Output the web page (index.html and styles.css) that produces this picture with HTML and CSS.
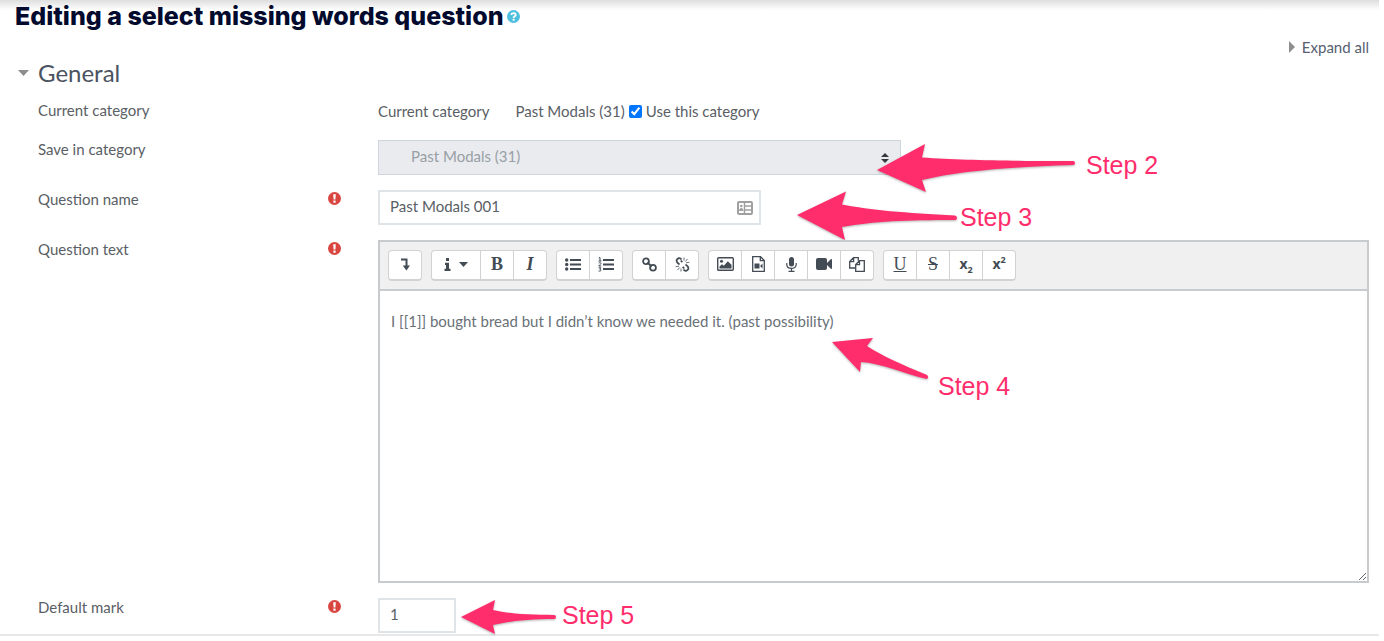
FILE: index.html
```html
<!DOCTYPE html>
<html lang="en">
<head>
<meta charset="utf-8">
<meta name="viewport" content="width=device-width, initial-scale=1">
<title>Editing a select missing words question</title>
<link rel="stylesheet" href="styles.css">
</head>
<body>
<svg class="defs" aria-hidden="true">
  <symbol id="required" viewBox="0 0 13 13">
    <circle cx="6.5" cy="6.5" r="6.5" fill="#d9453f"/>
    <path d="M5.2 2.2h2.600l-.4 5.300H5.600zM5.400 8.500h2.200v2.200H5.400z" fill="#fff"/>
  </symbol>
</svg>
<main class="page">
  <header class="title-bar">
    <h1 class="title">Editing a select missing words question</h1>
    <button class="help" type="button" aria-label="Help">
      <svg width="13" height="13" viewBox="0 0 13 13"><circle cx="6.5" cy="6.5" r="6.5" fill="#4fbfe0"/><path d="M4.4 5C4.4 2.4 8.7 2.4 8.7 4.9 8.7 6.4 6.6 6.3 6.6 7.9" fill="none" stroke="#fff" stroke-width="1.8"/><path d="M5.6 8.8h2v1.9h-2z" fill="#fff"/></svg>
    </button>
  </header>
  <div class="expand"><a class="expand-link" href="#general"><svg width="6" height="12" viewBox="0 0 6 12"><path d="M0 0l6 6-6 6z" fill="#8e8e8e"/></svg>Expand all</a></div>

  <form class="form" id="general">
    <h2 class="section"><button class="section-toggle" type="button"><svg width="11" height="6" viewBox="0 0 11 6"><path d="M0 0h11L5.5 6z" fill="#8e8e8e"/></svg>General</button></h2>

    <div class="rows">
      <div class="row">
        <span class="label">Current category</span>
        <div class="field inline">
          <span class="static">Current category</span>
          <span>Past Modals (31)</span>
          <label class="check"><input class="checkbox" type="checkbox" checked>Use this category</label>
        </div>
      </div>

      <div class="row">
        <label class="label" for="category">Save in category</label>
        <div class="field">
          <div class="select-box">
            <select class="control select" id="category" disabled><option>Past Modals (31)</option></select>
            <svg class="select-arrows" width="8" height="10" viewBox="0 0 8 10"><path d="M0 4L4 0l4 4zM0 6l4 4 4-4z" fill="#343a40"/></svg>
          </div>
          <svg class="note note-category" width="300" height="60" viewBox="870 138 300 60">
            <path class="arrow" d="M877 170L925 144 922 157.5C960 160 1000 161 1073 161Q1075 161 1075 163T1073 165C1010 167 960 171 922 180L926 192z"/>
            <text class="step" x="1086" y="174">Step 2</text>
          </svg>
        </div>
      </div>

      <div class="row">
        <label class="label" for="name">Question name</label>
        <svg class="required" role="img" aria-label="Required"><use href="#required"/></svg>
        <div class="field">
          <div class="name-box">
            <input class="control" id="name" type="text" value="Past Modals 001">
            <svg class="card-icon" width="16" height="14" viewBox="0 0 16 14"><rect x="1" y="1" width="14" height="12" rx="1" fill="none" stroke="#a0a0a0" stroke-width="2"/><path d="M7.500 1v12M8 5h7M8 9h7" stroke="#a0a0a0" stroke-width="1.500"/><circle cx="4.300" cy="5" r="1.300" fill="#a0a0a0"/><path d="M2 10c0-4 4.500-4 4.500 0z" fill="#a0a0a0"/></svg>
          </div>
          <svg class="note note-name" width="250" height="60" viewBox="790 186 250 60">
            <path class="arrow" d="M797 215L846 191.5 842 204.5C870 210 905 213 955 215.5Q957 216 957 218T955 220C905 220 875 221 842 227L845 240z"/>
            <text class="step" x="960" y="226">Step 3</text>
          </svg>
        </div>
      </div>

      <div class="row">
        <label class="label" for="text">Question text</label>
        <svg class="required" role="img" aria-label="Required"><use href="#required"/></svg>
        <div class="field">
          <div class="editor">
            <div class="toolbar" role="toolbar" aria-label="Editor">
              <div class="group">
                <button class="tool" type="button" aria-label="Show more buttons"><svg width="10" height="13" viewBox="0 0 10 13"><path d="M1 1.5h5.5V8" fill="none" stroke="#434b54" stroke-width="2"/><path d="M2.8 7.5H10L6.4 12.5z" fill="#434b54"/></svg></button>
              </div>
              <div class="group">
                <button class="tool wide" type="button" aria-label="Paragraph styles"><svg width="7" height="13" viewBox="0 0 7 13"><path d="M2 0h3v3H2zM1 4.8h4v6h1.5V13H.5v-2.200H2V7H1z" fill="#434b54"/></svg><svg width="9" height="5" viewBox="0 0 9 5"><path d="M0 0h9L4.5 5z" fill="#434b54"/></svg></button>
                <button class="tool serif" type="button" aria-label="Bold">B</button>
                <button class="tool serif italic" type="button" aria-label="Italic">I</button>
              </div>
              <div class="group">
                <button class="tool" type="button" aria-label="Unordered list"><svg width="16" height="13" viewBox="0 0 16 13"><path d="M5 2h11M5 6.5h11M5 11h11" stroke="#434b54" stroke-width="2"/><g fill="#434b54"><circle cx="1.7" cy="2" r="1.7"/><circle cx="1.7" cy="6.5" r="1.7"/><circle cx="1.7" cy="11" r="1.7"/></g></svg></button>
                <button class="tool" type="button" aria-label="Ordered list"><svg width="16" height="15" viewBox="0 0 16 15"><path d="M5 3h11M5 7.5h11M5 12h11" stroke="#434b54" stroke-width="2"/><path d="M.8 1L2 .5V4M.5 4h3M.7 6c2-1 3 .3 1.500 1.500L.7 9h2.600M.7 10.800h2.200L1.700 12.200c2 0 1.800 2.500-1.200 1.800" fill="none" stroke="#434b54"/></svg></button>
              </div>
              <div class="group">
                <button class="tool" type="button" aria-label="Link"><svg width="15" height="15" viewBox="0 0 15 15" fill="none" stroke="#434b54" stroke-width="1.8"><circle cx="4" cy="4.3" r="2.9"/><circle cx="11" cy="10.7" r="2.9"/><path d="M5.3 5.5l4.400 4"/></svg></button>
                <button class="tool" type="button" aria-label="Unlink"><svg width="15" height="15" viewBox="0 0 15 15" fill="none" stroke="#434b54"><path stroke-width="1.8" d="M6.500 2.500C5 .5 2.500 1 1.700 3S3 6.500 4.500 7.500M7.300 5.200L5.800 3.500M8.500 12.500c1.500 2 4 1.500 4.800-.5S12 8.500 10.500 7.500M7.700 9.800l1.500 1.700"/><path stroke-width=".8" d="M9 3.500V.5M10.300 4.500L12.500 2M11 5.800l3.300-.5M6 11.500v3M4.700 10.500L2.500 13M4 9.200l-3.300.5"/></svg></button>
              </div>
              <div class="group">
                <button class="tool" type="button" aria-label="Image"><svg width="17" height="14" viewBox="0 0 17 14"><rect x=".7" y=".7" width="15.600" height="12.600" rx="1" fill="none" stroke="#434b54" stroke-width="1.400"/><circle cx="4.500" cy="4.200" r="1.500" fill="#434b54"/><path d="M2.500 11.500V9.500l2.500-2.300 1.800 1.500 4-4.500 3.700 3.500v3.800z" fill="#434b54"/></svg></button>
                <button class="tool" type="button" aria-label="Media"><svg width="13" height="16" viewBox="0 0 13 16"><path d="M.7.700h7.800L12.300 4.500v10.800H.7zM8.300.7v4h4" fill="none" stroke="#434b54" stroke-width="1.300"/><path d="M2.500 7.500h5v5h-5zM8 10l2.500-2.500v5z" fill="#434b54"/></svg></button>
                <button class="tool" type="button" aria-label="Record audio"><svg width="11" height="15" viewBox="0 0 11 15"><rect x="3" width="5" height="9.500" rx="2.500" fill="#434b54"/><path d="M.8 6v1.500c0 5.200 9.400 5.200 9.400 0V6M5.500 11.500v2.800M2.500 14.400h6" fill="none" stroke="#434b54" stroke-width="1.200"/></svg></button>
                <button class="tool" type="button" aria-label="Record video"><svg width="16" height="12" viewBox="0 0 16 12"><rect width="11" height="12" rx="2" fill="#434b54"/><path d="M10 6l4.500-4.500Q16 .5 16 2v8q0 1.500-1.500.5z" fill="#434b54"/></svg></button>
                <button class="tool" type="button" aria-label="Manage files"><svg width="16" height="15" viewBox="0 0 16 15" fill="none" stroke="#434b54" stroke-width="1.300"><path d="M6.700 11H.7V4.500L4.500.7h4.800v3M4.600.7v3.900H.7"/><path d="M10.500 3.700h4.800v10.600H6.700V7.500zM10.500 3.700v3.900H6.700"/></svg></button>
              </div>
              <div class="group">
                <button class="tool serif underline" type="button" aria-label="Underline">U</button>
                <button class="tool serif strike" type="button" aria-label="Strike through">S</button>
                <button class="tool script" type="button" aria-label="Subscript"><span>x<sub>2</sub></span></button>
                <button class="tool script" type="button" aria-label="Superscript"><span>x<sup>2</sup></span></button>
              </div>
            </div>
            <textarea class="content" id="text" spellcheck="false">I [[1]] bought bread but I didn’t know we needed it. (past possibility)</textarea>
          </div>
          <svg class="note note-text" width="200" height="80" viewBox="826 330 200 80">
            <path class="arrow" d="M832 342L873 338 867 346C882 356 903 365 927 375Q929 377 927 379C905 374 881 363 861 362L860 372z"/>
            <text class="step" x="938" y="395">Step 4</text>
          </svg>
        </div>
      </div>

      <div class="row">
        <label class="label" for="mark">Default mark</label>
        <svg class="required" role="img" aria-label="Required"><use href="#required"/></svg>
        <div class="field">
          <input class="control mark" id="mark" type="text" value="1">
          <svg class="note note-mark" width="190" height="44" viewBox="456 596 190 44">
            <path class="arrow" d="M461 617L495 600 493 610C510 614 530 615 554 615Q556 615 556 617T554 619C530 619 510 621 493 625L495 634z"/>
            <text class="step" x="562" y="624">Step 5</text>
          </svg>
        </div>
      </div>
    </div>
  </form>
</main>
</body>
</html>
```
FILE: styles.css
```css
* {
  box-sizing: border-box;
}

body {
  margin: 0;
  background: #fff;
  color: #5a6065;
  font: 15px/20px Lato, "Liberation Sans", sans-serif;
}

button,
input,
select,
textarea {
  margin: 0;
  color: inherit;
  font: inherit;
}

svg {
  flex: none;
}

.defs {
  position: absolute;
  width: 0;
  height: 0;
}

.page {
  margin-right: 5px;
  padding: 0 10px 0 15px;
  border-bottom: 2px solid #e8e8e8;
  background: linear-gradient(#dedede, #fff 10px) no-repeat;
}

.title-bar {
  display: flex;
  align-items: center;
  gap: 3px;
  height: 32px;
}

.title {
  margin: 0;
  color: #020a2e;
  font: 800 25px/32px Inter, sans-serif;
}

.help {
  display: flex;
  padding: 0;
  border: 0;
  background: none;
}

.expand {
  display: flex;
  justify-content: flex-end;
  padding-top: 5px;
}

.expand-link {
  display: flex;
  align-items: center;
  gap: 7px;
  color: #565e70;
  text-decoration: none;
}

.section {
  margin: 0;
}

.section-toggle {
  display: flex;
  align-items: center;
  gap: 9px;
  padding: 0 0 0 3px;
  border: 0;
  background: none;
  color: #4a535f;
  font: 400 24px/32px Lato, sans-serif;
}

.rows {
  display: flex;
  flex-direction: column;
  gap: 15px;
  padding: 12px 0 1px 23px;
}

.row {
  display: grid;
  grid-template-columns: 290px 50px 1fr;
  min-height: 24px;
}

.label {
  line-height: 18px;
}

.required {
  width: 13px;
  height: 13px;
  margin-top: 2px;
}

.field {
  position: relative;
  grid-column: 3;
  min-width: 0;
}

.inline {
  display: flex;
  align-items: center;
  align-self: start;
  height: 20px;
}

.static {
  margin-right: 26px;
}

.check {
  display: flex;
  align-items: center;
  gap: 4px;
  margin-left: 4px;
}

.checkbox {
  width: 13px;
  height: 13px;
}

.control {
  display: block;
  width: 100%;
  height: 35px;
  padding: 0 10px 4px;
  border: 2px solid #dfe4e8;
  border-radius: 0;
  background: #fff;
}

.select-box {
  position: relative;
  max-width: 523px;
}

.select {
  padding-left: 32px;
  border: 1px solid #ced6dd;
  background: #e9ebef;
  color: #989fa5;
  opacity: 1;
  appearance: none;
}

.select-arrows {
  position: absolute;
  top: 13px;
  right: 12px;
}

.name-box {
  position: relative;
  max-width: 383px;
}

.card-icon {
  position: absolute;
  top: 11px;
  right: 8px;
}

.control.mark {
  width: 78px;
}

.editor {
  border: 2px solid #c8cbce;
}

.toolbar {
  display: flex;
  flex-wrap: wrap;
  gap: 9px;
  padding: 8px;
  border-bottom: 2px solid #c8ccd0;
  background: #f0f0f0;
}

.group {
  display: flex;
  overflow: hidden;
  border: 1px solid #d2d2d2;
  border-bottom-width: 2px;
  border-radius: 4px;
  background: #fff;
}

.tool {
  display: flex;
  align-items: center;
  justify-content: center;
  width: 32px;
  height: 28px;
  padding: 0 0 2px;
  border: 0;
  background: none;
  color: #434b54;
}

.tool + .tool {
  width: 33px;
  border-left: 1px solid #d2d2d2;
}

.wide {
  gap: 8px;
  width: 48px;
}

.serif {
  font: 700 18px/20px "Liberation Serif", serif;
}

.italic {
  font-style: italic;
}

.underline,
.strike {
  font-weight: 400;
}

.underline {
  text-decoration: underline;
}

.strike {
  text-decoration: line-through;
}

.script {
  font: 700 14px/20px "Open Sans", sans-serif;
}

.script sub,
.script sup {
  font-size: 9px;
  line-height: 0;
}

.content {
  display: block;
  width: 100%;
  height: 290px;
  padding: 20px 11px;
  border: 0;
  outline: 0;
  background: #fff;
  color: #6a7177;
  resize: vertical;
}

.note {
  position: absolute;
  overflow: visible;
  pointer-events: none;
}

.note-category {
  top: -2px;
  left: 492px;
}

.note-name {
  top: -4px;
  left: 412px;
}

.note-text {
  top: 90px;
  left: 448px;
}

.note-mark {
  top: -2px;
  left: 78px;
}

.arrow {
  fill: #ff2d6c;
  filter: drop-shadow(0 1px 1px rgba(0, 0, 0, 0.3));
}

.step {
  fill: #ff2d6c;
  font: 25px "Liberation Sans", sans-serif;
}
```
